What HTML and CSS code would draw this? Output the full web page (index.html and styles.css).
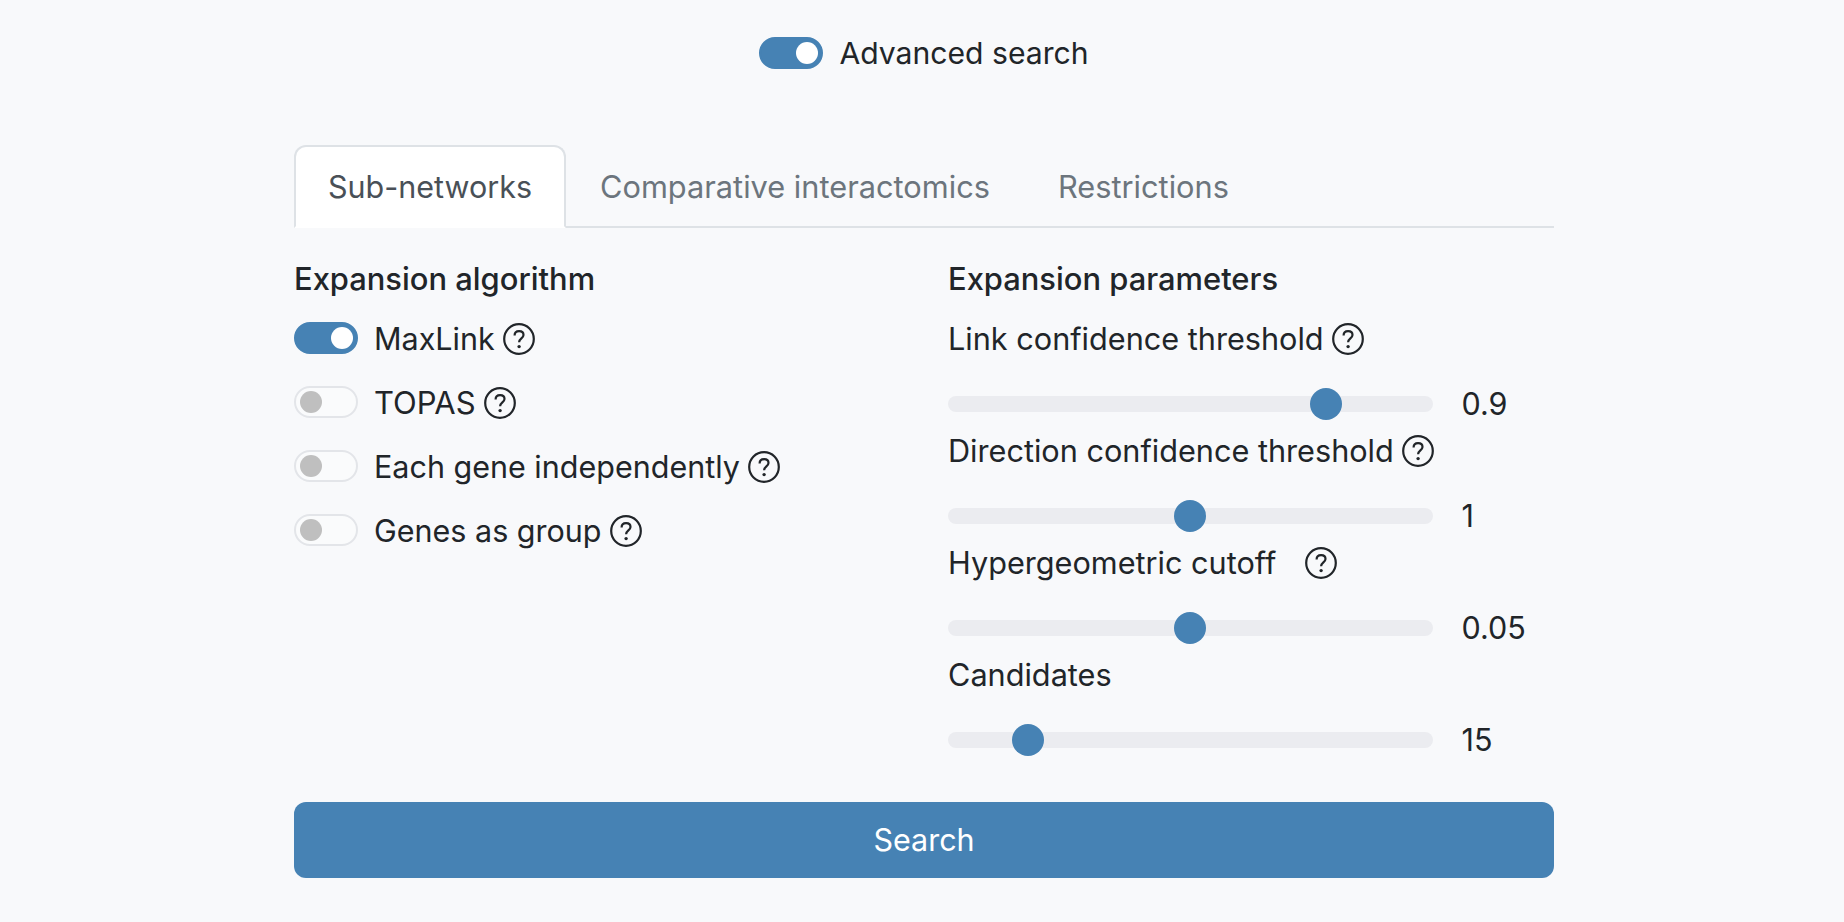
FILE: index.html
```html
<!DOCTYPE html>
<html lang="en">
<head>
<meta charset="utf-8">
<title>Advanced search</title>
<link rel="stylesheet" href="styles.css">
</head>
<body>
<main class="page">
  <label class="switch-row top-switch">
    <input type="checkbox" class="switch" checked>
    <span>Advanced search</span>
  </label>

  <nav class="tabs">
    <a class="tab active">Sub-networks</a>
    <a class="tab">Comparative interactomics</a>
    <a class="tab">Restrictions</a>
  </nav>

  <section class="columns">
    <div class="col-left">
      <h2 class="heading">Expansion algorithm</h2>
      <label class="switch-row algo"><input type="checkbox" class="switch" checked><span>MaxLink</span><svg class="help" viewBox="0 0 32 32"><circle cx="16" cy="16" r="14.8"/><path d="M11.6 12.6c0-2.8 2-4.4 4.5-4.4 2.6 0 4.4 1.6 4.4 3.8 0 3.2-4.4 3.6-4.4 7.2"/><circle class="dot" cx="16.1" cy="23.6" r="1.7"/></svg></label>
      <label class="switch-row algo"><input type="checkbox" class="switch"><span class="topas">TOPAS</span><svg class="help" viewBox="0 0 32 32"><circle cx="16" cy="16" r="14.8"/><path d="M11.6 12.6c0-2.8 2-4.4 4.5-4.4 2.6 0 4.4 1.6 4.4 3.8 0 3.2-4.4 3.6-4.4 7.2"/><circle class="dot" cx="16.1" cy="23.6" r="1.7"/></svg></label>
      <label class="switch-row algo"><input type="checkbox" class="switch"><span>Each gene independently</span><svg class="help" viewBox="0 0 32 32"><circle cx="16" cy="16" r="14.8"/><path d="M11.6 12.6c0-2.8 2-4.4 4.5-4.4 2.6 0 4.4 1.6 4.4 3.8 0 3.2-4.4 3.6-4.4 7.2"/><circle class="dot" cx="16.1" cy="23.6" r="1.7"/></svg></label>
      <label class="switch-row algo"><input type="checkbox" class="switch"><span>Genes as group</span><svg class="help" viewBox="0 0 32 32"><circle cx="16" cy="16" r="14.8"/><path d="M11.6 12.6c0-2.8 2-4.4 4.5-4.4 2.6 0 4.4 1.6 4.4 3.8 0 3.2-4.4 3.6-4.4 7.2"/><circle class="dot" cx="16.1" cy="23.6" r="1.7"/></svg></label>
    </div>
    <div class="col-right">
      <h2 class="heading">Expansion parameters</h2>
      <div class="param">
        <div class="param-label"><span>Link confidence threshold</span><svg class="help" viewBox="0 0 32 32"><circle cx="16" cy="16" r="14.8"/><path d="M11.6 12.6c0-2.8 2-4.4 4.5-4.4 2.6 0 4.4 1.6 4.4 3.8 0 3.2-4.4 3.6-4.4 7.2"/><circle class="dot" cx="16.1" cy="23.6" r="1.7"/></svg></div>
        <div class="slider-row"><input type="range" class="slider" min="0" max="1000" value="799"><span class="value">0.9</span></div>
      </div>
      <div class="param">
        <div class="param-label"><span>Direction confidence threshold</span><svg class="help" viewBox="0 0 32 32"><circle cx="16" cy="16" r="14.8"/><path d="M11.6 12.6c0-2.8 2-4.4 4.5-4.4 2.6 0 4.4 1.6 4.4 3.8 0 3.2-4.4 3.6-4.4 7.2"/><circle class="dot" cx="16.1" cy="23.6" r="1.7"/></svg></div>
        <div class="slider-row"><input type="range" class="slider" min="0" max="1000" value="498"><span class="value">1</span></div>
      </div>
      <div class="param">
        <div class="param-label wide-gap"><span>Hypergeometric cutoff</span><svg class="help" viewBox="0 0 32 32"><circle cx="16" cy="16" r="14.8"/><path d="M11.6 12.6c0-2.8 2-4.4 4.5-4.4 2.6 0 4.4 1.6 4.4 3.8 0 3.2-4.4 3.6-4.4 7.2"/><circle class="dot" cx="16.1" cy="23.6" r="1.7"/></svg></div>
        <div class="slider-row"><input type="range" class="slider" min="0" max="1000" value="498"><span class="value">0.05</span></div>
      </div>
      <div class="param">
        <div class="param-label"><span>Candidates</span></div>
        <div class="slider-row"><input type="range" class="slider" min="0" max="1000" value="141"><span class="value">15</span></div>
      </div>
    </div>
  </section>

  <button class="search" type="button">Search</button>
</main>
</body>
</html>
```

FILE: styles.css
```css
* { box-sizing: border-box; }

html, body {
  margin: 0;
  height: 100%;
  background: #f8f9fb;
}

body {
  font-family: Inter, "Liberation Sans", sans-serif;
  font-size: 30.5px;
  line-height: 44px;
  color: #212529;
  overflow: hidden;
}

.page {
  width: 1260px;
  margin-left: 294px;
  padding-top: 31px;
}

.switch-row {
  display: flex;
  align-items: center;
  gap: 16px;
}

.top-switch {
  justify-content: center;
  height: 44px;
  font-size: 30.15px;
}

.switch {
  appearance: none;
  -webkit-appearance: none;
  flex: none;
  position: relative;
  width: 64px;
  height: 32px;
  margin: 0;
  border: 2px solid #e3e5e9;
  border-radius: 16px;
  background: #fafbfc;
}

.switch::before {
  content: "";
  position: absolute;
  left: 4px;
  top: 3px;
  width: 22px;
  height: 22px;
  border-radius: 50%;
  background: #bfbfbf;
}

.switch:checked {
  border-color: #4682b4;
  background: #4682b4;
}

.switch:checked::before {
  left: auto;
  right: 3px;
  background: #fff;
}

.tabs {
  display: flex;
  margin-top: 70px;
  height: 83px;
  border-bottom: 2px solid #dee2e6;
}

.tab {
  height: 83px;
  padding: 0 32px;
  display: flex;
  align-items: center;
  color: #6c757d;
  font-size: 30.75px;
  border: 2px solid transparent;
  border-radius: 12px 12px 0 0;
}

.tab.active {
  color: #495057;
  font-size: 30.5px;
  background: #fff;
  border-color: #dee2e6 #dee2e6 #fff;
}

.columns {
  display: flex;
  padding-top: 27px;
}

.col-left { width: 654px; }
.col-right { flex: 1; }

.heading {
  margin: 0 0 16px;
  font-size: 30.9px;
  line-height: 48px;
  font-weight: 500;
}

.algo {
  height: 40px;
  margin-bottom: 24px;
}

.algo .switch { margin-top: -2px; }

.topas { font-size: 31px; }

.help {
  flex: none;
  width: 32px;
  height: 32px;
  margin-left: -8px;
  fill: none;
  stroke: #212529;
  stroke-width: 2.2;
}

.help .dot {
  fill: #212529;
  stroke: none;
}

.param-label {
  display: flex;
  align-items: center;
  gap: 16px;
  height: 40px;
  font-size: 30.65px;
}

.wide-gap { gap: 37px; }

.slider-row {
  display: flex;
  align-items: center;
  height: 72px;
  padding: 29px 0 11px;
}

.slider {
  appearance: none;
  -webkit-appearance: none;
  width: 485px;
  height: 32px;
  margin: 0;
  background: transparent;
}

.slider::-webkit-slider-runnable-track {
  height: 16px;
  border-radius: 8px;
  background: #ebecf0;
}

.slider::-webkit-slider-thumb {
  -webkit-appearance: none;
  width: 32px;
  height: 32px;
  margin-top: -8px;
  border-radius: 50%;
  background: #4682b4;
}

.value {
  margin-left: 28.5px;
}

.search {
  display: block;
  width: 100%;
  height: 76px;
  margin-top: 35px;
  border: 0;
  border-radius: 12px;
  background: #4682b4;
  color: #fff;
  font: inherit;
}
```
